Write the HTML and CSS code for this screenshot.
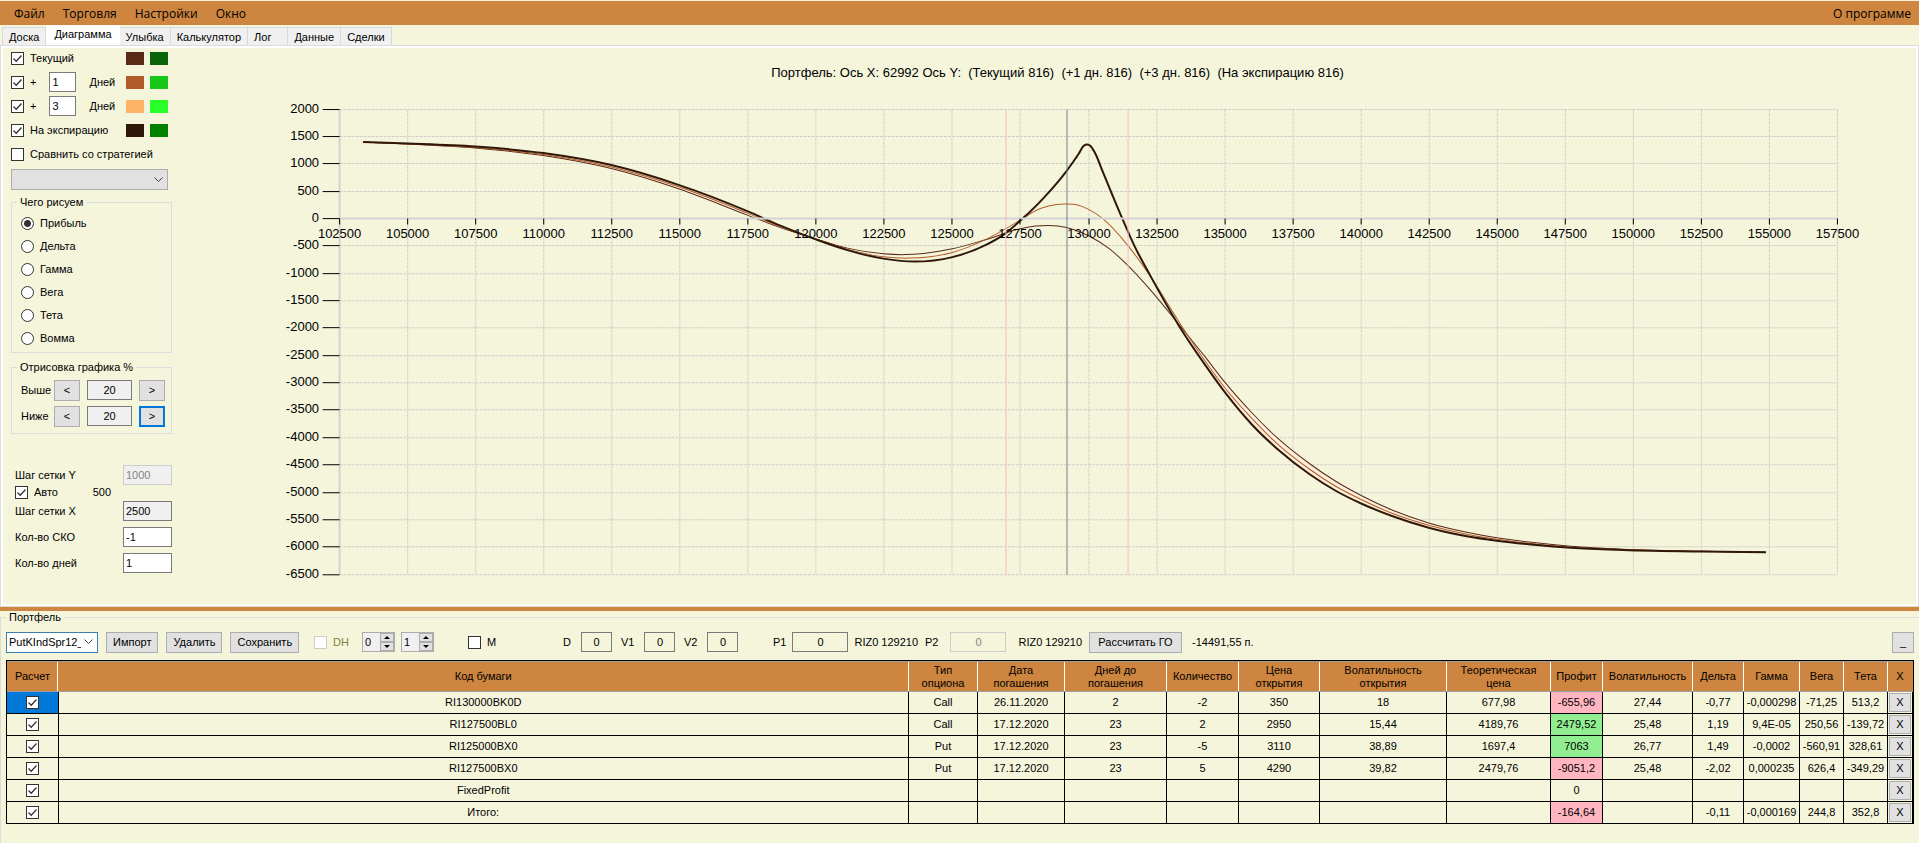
FILE: index.html
```html
<!DOCTYPE html>
<html lang="ru">
<head>
  <meta charset="UTF-8">
  <meta name="viewport" content="width=device-width, initial-scale=1.0">
  <title>Опционы - Диаграмма</title>
  <link rel="stylesheet" href="styles.css">
</head>
<body>
  <nav class="menu">
    <button type="button">Файл</button>
    <button type="button">Торговля</button>
    <button type="button">Настройки</button>
    <button type="button">Окно</button>
    <button type="button" class="about">О программе</button>
  </nav>

  <div class="tabs">
    <button type="button">Доска</button>
    <button type="button" class="active">Диаграмма</button>
    <button type="button">Улыбка</button>
    <button type="button">Калькулятор</button>
    <button type="button" class="wide">Лог</button>
    <button type="button">Данные</button>
    <button type="button">Сделки</button>
  </div>

  <main class="page">
    <aside class="sidebar">
      <div class="line">
        <label><input type="checkbox" checked> Текущий</label>
        <span class="swatch brown1"></span><span class="swatch green1"></span>
      </div>
      <div class="line">
        <label><input type="checkbox" checked> +</label>
        <input type="text" class="days" id="days1" value="1">
        <label for="days1" class="days-label">Дней</label>
        <span class="swatch brown2"></span><span class="swatch green2"></span>
      </div>
      <div class="line">
        <label><input type="checkbox" checked> +</label>
        <input type="text" class="days" id="days2" value="3">
        <label for="days2" class="days-label">Дней</label>
        <span class="swatch brown3"></span><span class="swatch green3"></span>
      </div>
      <div class="line">
        <label><input type="checkbox" checked> На экспирацию</label>
        <span class="swatch brown4"></span><span class="swatch green4"></span>
      </div>
      <div class="line">
        <label><input type="checkbox"> Сравнить со стратегией</label>
      </div>
      <select class="strategy" aria-label="Стратегия"><option></option></select>

      <fieldset class="radios">
        <legend>Чего рисуем</legend>
        <label><input type="radio" name="draw" checked> Прибыль</label>
        <label><input type="radio" name="draw"> Дельта</label>
        <label><input type="radio" name="draw"> Гамма</label>
        <label><input type="radio" name="draw"> Вега</label>
        <label><input type="radio" name="draw"> Тета</label>
        <label><input type="radio" name="draw"> Вомма</label>
      </fieldset>

      <fieldset class="range">
        <legend>Отрисовка графика %</legend>
        <div class="range-row">
          <label for="above">Выше</label>
          <button type="button">&lt;</button>
          <input type="text" id="above" value="20">
          <button type="button">&gt;</button>
        </div>
        <div class="range-row">
          <label for="below">Ниже</label>
          <button type="button">&lt;</button>
          <input type="text" id="below" value="20">
          <button type="button" class="focused">&gt;</button>
        </div>
      </fieldset>

      <div class="steps">
        <div class="step tight"><label for="stepY">Шаг сетки Y</label><input type="text" id="stepY" value="1000" disabled></div>
        <div class="step auto"><label><input type="checkbox" checked> Авто</label><span>500</span></div>
        <div class="step"><label for="stepX">Шаг сетки X</label><input type="text" id="stepX" class="gray" value="2500"></div>
        <div class="step"><label for="sko">Кол-во СКО</label><input type="text" id="sko" value="-1"></div>
        <div class="step"><label for="dayCount">Кол-во дней</label><input type="text" id="dayCount" value="1"></div>
      </div>
    </aside>
    <svg id="chart" class="chart" viewBox="0 0 1739 556"></svg>
  </main>

  <div class="splitter"></div>

  <fieldset class="portfolio">
    <legend>Портфель</legend>
    <div class="toolbar">
      <div class="group">
        <select class="file" aria-label="Портфель"><option>PutKIndSpr12_</option></select>
        <button type="button">Импорт</button>
        <button type="button">Удалить</button>
        <button type="button">Сохранить</button>
      </div>
      <div class="group spins">
        <label class="dh"><input type="checkbox" disabled> DH</label>
        <span class="spin"><input type="text" value="0" aria-label="DH 1"><span><button type="button" class="up" aria-label="Больше"></button><button type="button" class="down" aria-label="Меньше"></button></span></span>
        <span class="spin"><input type="text" value="1" aria-label="DH 2"><span><button type="button" class="up" aria-label="Больше"></button><button type="button" class="down" aria-label="Меньше"></button></span></span>
      </div>
      <div class="group"><label><input type="checkbox"> M</label></div>
      <div class="group value"><label for="d">D</label><input type="text" id="d" class="num" value="0"></div>
      <div class="group value"><label for="v1">V1</label><input type="text" id="v1" class="num" value="0"></div>
      <div class="group value"><label for="v2">V2</label><input type="text" id="v2" class="num" value="0"></div>
      <div class="group p1"><label for="p1">P1</label><input type="text" id="p1" class="num price" value="0"><span>RIZ0 129210</span></div>
      <div class="group p2"><label for="p2">P2</label><input type="text" id="p2" class="num price" value="0" disabled><span>RIZ0 129210</span></div>
      <div class="group value"><button type="button" class="calc">Рассчитать ГО</button><span>-14491,55 п.</span></div>
      <button type="button" class="collapse">_</button>
    </div>

    <div class="grid">
      <table>
        <colgroup>
          <col class="w51"><col><col class="w69"><col class="w87"><col class="w102"><col class="w72"><col class="w81"><col class="w127"><col class="w104"><col class="w52"><col class="w90"><col class="w51"><col class="w56"><col class="w44"><col class="w44"><col class="w25">
        </colgroup>
        <thead>
          <tr>
            <th>Расчет</th>
            <th>Код бумаги</th>
            <th>Тип<br>опциона</th>
            <th>Дата<br>погашения</th>
            <th>Дней до<br>погашения</th>
            <th>Количество</th>
            <th>Цена<br>открытия</th>
            <th>Волатильность<br>открытия</th>
            <th>Теоретическая<br>цена</th>
            <th>Профит</th>
            <th>Волатильность</th>
            <th>Дельта</th>
            <th>Гамма</th>
            <th>Вега</th>
            <th>Тета</th>
            <th>X</th>
          </tr>
        </thead>
        <tbody id="rows"></tbody>
      </table>
    </div>
  </fieldset>

  <script>
    // Portfolio table
    const rows = [
      ['RI130000BK0D', 'Call', '26.11.2020', '2', '-2', '350', '18', '677,98', '-655,96', '27,44', '-0,77', '-0,000298', '-71,25', '513,2'],
      ['RI127500BL0', 'Call', '17.12.2020', '23', '2', '2950', '15,44', '4189,76', '2479,52', '25,48', '1,19', '9,4E-05', '250,56', '-139,72'],
      ['RI125000BX0', 'Put', '17.12.2020', '23', '-5', '3110', '38,89', '1697,4', '7063', '26,77', '1,49', '-0,0002', '-560,91', '328,61'],
      ['RI127500BX0', 'Put', '17.12.2020', '23', '5', '4290', '39,82', '2479,76', '-9051,2', '25,48', '-2,02', '0,000235', '626,4', '-349,29'],
      ['FixedProfit', '', '', '', '', '', '', '', '0', '', '', '', '', ''],
      ['Итого:', '', '', '', '', '', '', '', '-164,64', '', '-0,11', '-0,000169', '244,8', '352,8']
    ];
    const PROFIT = 8;

    document.getElementById('rows').innerHTML = rows.map((row, i) => {
      const cells = row.map((value, n) => {
        const profit = parseFloat(value);
        const cls = n !== PROFIT || !profit ? '' : profit > 0 ? 'plus' : 'minus';
        return `<td class="${cls}">${value}</td>`;
      }).join('');
      return `<tr>
        <td class="${i === 0 ? 'selected' : ''}"><input type="checkbox" checked aria-label="${row[0]}"></td>
        ${cells}
        <td class="del"><button type="button">X</button></td>
      </tr>`;
    }).join('');

    // Chart
    const left = 163.5, right = 1660.5, zero = 171;
    const px = (v) => Math.round(left + (v - 102500) * (right - left) / 55000 - 0.5) + 0.5;
    const py = (v) => Math.round(zero - v * 0.0547) + 0.5;
    const yMax = py(2000), yMin = py(-6500);

    // curve points in chart units
    const expiry = [[187,95],[232,96.5],[299,99.5],[367,106],[435,118],[503,138],[571,164],[604,178.5],[640,192.5],[671,203],[707,211.5],[738,214.5],[776,210],[810,197.5],[828,187],[845,172.5],[867,151],[890,124],[902,107],[907,99],[910,97.5],[914,99],[919,107],[926,124],[946,172],[958,199],[974,229],[1002,278],[1028,317],[1049,346],[1075,377],[1101,402],[1133,427],[1159,443.5],[1185,456.5],[1216,469],[1252,480.5],[1290,489],[1320,493.5],[1357,497.5],[1394,500.5],[1446,502.7],[1525,504.3],[1589,505]];
    const current = [[187,95],[232,97],[299,101],[367,108.5],[435,121.5],[503,142],[571,168],[604,180.5],[640,192],[671,201],[707,206.7],[729,207.5],[747,206.3],[776,201.7],[810,192.3],[845,181.3],[859,179],[872,178.3],[890,180.3],[912,188.7],[932,201],[951,218],[974,243],[1002,277],[1028,309],[1049,336],[1075,365.3],[1101,391],[1133,416.5],[1159,434],[1185,448.5],[1216,463],[1252,475.7],[1290,485],[1320,490.5],[1357,495.3],[1394,499],[1446,502],[1525,504],[1589,505]];
    const plus1 = [[187,95],[232,97],[299,100.5],[367,107.5],[435,120],[503,140],[571,166],[604,179.5],[640,192],[671,202],[707,209.7],[734,211],[776,205.3],[810,192],[845,172.3],[859,163.7],[872,159],[890,157],[901,158],[912,162.3],[926,171.3],[951,198],[973,228],[1002,274],[1028,313],[1049,341.5],[1075,371],[1101,397],[1133,422],[1159,439],[1185,452.5],[1216,466.3],[1252,478],[1290,487],[1320,492],[1357,496.5],[1394,500],[1446,502.3],[1525,504],[1589,505]];

    function curve(points) {
      const last = points.length - 1;
      const slope = (i) => (points[i + 1][1] - points[i][1]) / (points[i + 1][0] - points[i][0]);
      const tangent = (i) => {
        if (i === 0) return slope(0);
        if (i === last) return slope(last - 1);
        const h1 = points[i][0] - points[i - 1][0];
        const h2 = points[i + 1][0] - points[i][0];
        return (slope(i - 1) * h2 + slope(i) * h1) / (h1 + h2);
      };
      let d = `M${points[0]}`;
      for (let i = 0; i < last; i++) {
        const a = points[i], b = points[i + 1];
        const third = (b[0] - a[0]) / 3;
        d += `C${a[0] + third},${a[1] + tangent(i) * third} ${b[0] - third},${b[1] - tangent(i + 1) * third} ${b}`;
      }
      return d;
    }

    // light fill between the current and expiry curves
    function band(from, to) {
      const inside = (p) => p[0] >= from && p[0] <= to;
      return `M${current.filter(inside).join('L')}L${expiry.filter(inside).reverse().join('L')}Z`;
    }

    const line = (cls, x1, y1, x2, y2) => `<line class="${cls}" x1="${x1}" y1="${y1}" x2="${x2}" y2="${y2}"/>`;
    let net = '', ticks = '', labels = '';

    for (let v = 102500; v <= 157500; v += 2500) {
      const x = px(v);
      net += line('net', x, yMax, x, yMin);
      ticks += line('tick', x, py(0), x, py(0) + 6);
      labels += `<text class="x-label" x="${x}" y="191">${v}</text>`;
    }
    for (let v = 2000; v >= -6500; v -= 500) {
      const y = py(v);
      if (v !== 0) net += line('net', left, y, right, y);
      ticks += line('tick', left - 17, y, left, y);
      labels += `<text class="y-label" x="143" y="${y + 3.5}">${v}</text>`;
    }

    document.getElementById('chart').innerHTML = `
      <text class="title" x="881" y="30">Портфель: Ось X: 62992 Ось Y:  (Текущий 816)  (+1 дн. 816)  (+3 дн. 816)  (На экспирацию 816)</text>
      ${net}
      <path class="band" d="${band(187, 571)}${band(1002, 1589)}"/>
      <path class="current" d="${curve(current)}"/>
      <path class="plus1" d="${curve(plus1)}"/>
      <path class="expiry" d="${curve(expiry)}"/>
      ${line('axis', left, yMax, left, yMin)}
      ${line('axis', left, py(0), right, py(0))}
      ${line('sko', 829.5, yMax, 829.5, yMin)}
      ${line('sko', 951.5, yMax, 951.5, yMin)}
      ${line('price-line', 890.5, yMax, 890.5, yMin)}
      ${ticks}
      ${labels}`;
  </script>
</body>
</html>
```
FILE: styles.css
```css
* {
  box-sizing: border-box;
}

body {
  margin: 0;
  min-height: 100vh;
  display: flex;
  flex-direction: column;
  background: #f5f5dc;
  color: #000;
  font-family: "Liberation Sans", Arial, sans-serif;
  font-size: 11px;
  line-height: 13px;
}

button, input, select {
  font: inherit;
  color: inherit;
  margin: 0;
}

button {
  padding: 0;
  background: #e1e1e1;
  border: 1px solid #adadad;
}

input[type="text"] {
  height: 20px;
  padding: 0 2px;
  background: #fff;
  border: 1px solid #7a7a7a;
  border-radius: 0;
}

input[type="text"]:disabled {
  background: #f0f0f0;
  border-color: #ccc;
  color: #838383;
}

input[type="checkbox"] {
  appearance: none;
  flex: none;
  width: 13px;
  height: 13px;
  background: #fff;
  border: 1px solid #333;
}

input[type="checkbox"]:checked {
  background: #fff url("data:image/svg+xml,%3Csvg xmlns='http://www.w3.org/2000/svg' viewBox='0 0 11 11'%3E%3Cpath d='M1.5 5.5L4.2 8.2L9.5 2.5' fill='none' stroke='%23333' stroke-width='1.3'/%3E%3C/svg%3E");
}

input[type="checkbox"]:disabled {
  border-color: #ccc;
}

input[type="radio"] {
  appearance: none;
  width: 13px;
  height: 13px;
  border: 1px solid #333;
  border-radius: 50%;
  background: #fff;
}

input[type="radio"]:checked {
  background: radial-gradient(circle, #333 3px, #fff 4px);
}

select {
  appearance: none;
  border: 1px solid #adadad;
  border-radius: 0;
  background: #e1e1e1 url("data:image/svg+xml,%3Csvg xmlns='http://www.w3.org/2000/svg' width='9' height='6' viewBox='0 0 9 6'%3E%3Cpath d='M.5 .5L4.5 4.5L8.5 .5' fill='none' stroke='%23444'/%3E%3C/svg%3E") no-repeat right 4px center;
}

label {
  display: flex;
  align-items: center;
  gap: 6px;
}

/* Menu */
.menu {
  display: flex;
  height: 24px;
  margin-top: 1px;
  padding: 0 5px;
  background: #cd853f;
}

.menu button {
  padding: 0 9px;
  border: none;
  background: none;
  font-family: "Open Sans", "Noto Sans", sans-serif;
  font-size: 12px;
}

.menu .about {
  margin-left: auto;
  padding-right: 3px;
}

/* Tabs */
.tabs {
  display: flex;
  align-items: flex-end;
  height: 20px;
  padding-left: 2px;
}

.tabs button {
  height: 18px;
  padding: 1px 6px 0;
  background: #f0f0f0;
  border: 1px solid #d9d9d9;
  border-width: 1px 1px 0 0;
}

.tabs button:first-child {
  border-left-width: 1px;
}

.tabs .active {
  height: 20px;
  padding: 0 8px 2px;
  background: #fff;
  border: none;
}

.tabs .wide {
  padding-right: 16px;
}

.page {
  display: flex;
  border: solid #dcdcdc;
  border-width: 1px 2px 1px 1px;
  outline: 2px solid #fff;
  outline-offset: -3px;
  padding: 1px 1px 3px 3px;
}

.chart {
  flex: 1;
  min-width: 0;
}

/* Left panel */
.sidebar {
  flex: none;
  width: 172px;
  margin-top: -1px;
  padding-left: 7px;
}

.line {
  display: flex;
  align-items: center;
  width: 157px;
  height: 24px;
}

.days {
  width: 27px;
  margin: 0 13px;
}

.swatch {
  width: 18px;
  height: 13px;
  margin-left: 6px;
}

label + .swatch {
  margin-left: auto;
}

.brown1 { background: #5a2a17; }
.brown2 { background: #b05c28; }
.brown3 { background: #ffb366; }
.brown4 { background: #301808; }
.green1 { background: #0a640a; }
.green2 { background: #18c818; }
.green3 { background: #28ff28; }
.green4 { background: #008000; }

.strategy {
  display: block;
  width: 157px;
  height: 21px;
  margin-top: 3px;
}

fieldset {
  margin: 0;
  border: 1px solid #dcdcdc;
}

.sidebar fieldset {
  width: 161px;
}

.sidebar legend {
  margin-left: 5px;
  padding: 0 3px;
}

.radios {
  margin-top: 6px;
  padding: 3px 0 2px;
}

.radios label {
  height: 23px;
  padding-left: 9px;
}

.range {
  margin-top: 8px;
  padding: 3px 0 4px;
}

.range-row {
  display: grid;
  grid-template-columns: 26px 26px 45px 26px;
  gap: 7px;
  align-items: center;
  height: 26px;
  padding-left: 9px;
}

.range-row label {
  white-space: nowrap;
}

.range-row button {
  height: 21px;
}

.range-row input[type="text"] {
  width: 45px;
  background: #f0f0f0;
  text-align: center;
}

.range-row .focused {
  border: 2px solid #0078d7;
}

.steps {
  width: 161px;
  margin-top: 31px;
  padding-left: 4px;
}

.step {
  display: flex;
  justify-content: space-between;
  align-items: center;
  height: 20px;
  margin-bottom: 6px;
}

.step input[type="text"] {
  width: 49px;
}

.step .gray {
  background: #f0f0f0;
}

.step.tight {
  margin-bottom: 0;
}

.step.auto {
  height: 14px;
  margin-bottom: 2px;
  padding-right: 61px;
}

/* Chart */
.chart text {
  font-size: 13px;
  white-space: pre;
}

.chart .title,
.chart .x-label {
  text-anchor: middle;
}

.chart .y-label {
  text-anchor: end;
}

.net {
  stroke: #d0d0c8;
  stroke-dasharray: 3 1;
}

.axis {
  stroke: #d3d3d3;
  stroke-width: 2;
}

.tick {
  stroke: #000;
}

.sko {
  stroke: #ffb6c1;
}

.price-line {
  stroke: #708090;
}

.chart path {
  fill: none;
}

.chart .band {
  fill: #fdefdc;
}

.current {
  stroke: #5a2a17;
}

.plus1 {
  stroke: #b05c28;
}

.expiry {
  stroke: #301808;
  stroke-width: 2;
}

.splitter {
  height: 4px;
  background: #cd853f;
}

/* Portfolio */
.portfolio {
  flex: 1;
  display: flex;
  flex-direction: column;
  min-width: 0;
  padding: 0 5px;
  border-width: 1px 0 0 1px;
}

.portfolio legend {
  margin-left: 0;
  padding: 0 3px;
}

.toolbar {
  display: grid;
  grid-template-columns: 308px 154px 95px 58px 63px 89px 152px 164px 1fr 22px;
  align-items: center;
  height: 36px;
}

.toolbar .group {
  display: flex;
  align-items: center;
  gap: 8px;
  white-space: nowrap;
}

.toolbar button {
  height: 21px;
  padding: 0 6px;
}

.toolbar .file {
  width: 92px;
  height: 21px;
  padding: 0 16px 0 2px;
  background-color: #fff;
  border-color: #3c7fb1;
}

.toolbar .num,
.toolbar .num:disabled {
  width: 31px;
  text-align: center;
  background: #f5f5dc;
}

.toolbar .group .price {
  width: 56px;
}

.toolbar .value {
  gap: 10px;
}

.toolbar .p2 {
  gap: 12px;
}

.toolbar .p1,
.toolbar .spins {
  gap: 6px;
}

.toolbar .calc {
  width: 93px;
}

.dh {
  color: #808040;
  margin-right: 7px;
}

.spin {
  display: flex;
  width: 33px;
  height: 20px;
  border: 1px solid #adadad;
  background: #f0f0f0;
}

.spin input[type="text"] {
  width: 17px;
  height: 18px;
  border: none;
  background: none;
}

.spin span {
  display: flex;
  flex-direction: column;
}

.toolbar .spin button {
  display: flex;
  align-items: center;
  justify-content: center;
  width: 14px;
  height: 9px;
  padding: 0;
}

.up::before,
.down::before {
  content: "";
  border: 3px solid transparent;
  border-top-width: 0;
  border-bottom-color: #000;
}

.down::before {
  border-top: 3px solid #000;
  border-bottom: 0;
}

.grid {
  flex: 1;
  border: solid #000;
  border-width: 1px 1px 0 1px;
}

table {
  width: 100%;
  table-layout: fixed;
  border-collapse: collapse;
}

.w25 { width: 25px; }
.w44 { width: 44px; }
.w51 { width: 51px; }
.w52 { width: 52px; }
.w56 { width: 56px; }
.w69 { width: 69px; }
.w72 { width: 72px; }
.w81 { width: 81px; }
.w87 { width: 87px; }
.w90 { width: 90px; }
.w102 { width: 102px; }
.w104 { width: 104px; }
.w127 { width: 127px; }

th {
  height: 30px;
  padding: 0;
  background: #cd853f;
  border: solid #a0a0a0;
  border-width: 1px 0;
  box-shadow: inset -1px 0 #fff;
  font-weight: normal;
}

th:last-child {
  box-shadow: none;
}

td {
  height: 22px;
  padding: 0;
  border-right: 1px solid #000;
  border-bottom: 1px solid #000;
  text-align: center;
  white-space: nowrap;
}

td input[type="checkbox"] {
  display: block;
  margin: 0 auto;
}

td.selected {
  background: #0078d7;
}

td.plus {
  background: #90ee90;
}

td.minus {
  background: #ffb6c1;
}

.del button {
  display: block;
  width: 22px;
  height: 19px;
  margin: 0 auto;
}
```
